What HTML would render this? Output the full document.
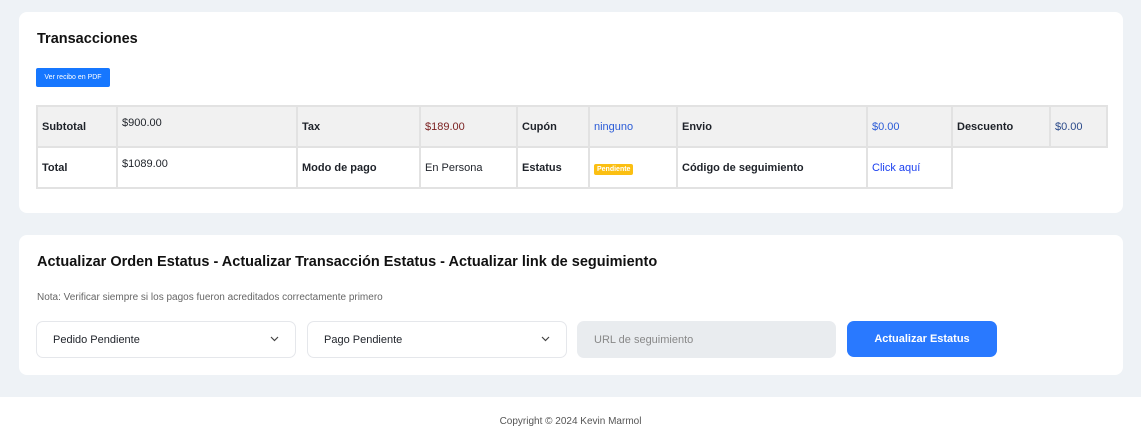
<!DOCTYPE html>
<html><head><meta charset="utf-8"><style>
*{box-sizing:border-box;margin:0;padding:0}
html,body{width:1141px;height:439px;overflow:hidden}
body{background:#eef2f6;font-family:"Liberation Sans",sans-serif;color:#1e2229;position:relative}
.card{position:absolute;left:19px;width:1104px;background:#fff;border-radius:8px}
h2{position:absolute;font-size:14.5px;font-weight:bold;color:#111}
.btn{position:absolute;left:17px;top:56px;width:74px;height:19px;background:#1677ff;color:#fff;font-size:7px;border-radius:2px;text-align:center;line-height:19px}
table{position:absolute;left:17px;top:93px;border-collapse:collapse;font-size:11px;table-layout:fixed;width:1070px}
td{border:2px solid #e2e2e2;height:41px;padding:0 4px;vertical-align:middle;white-space:nowrap}
tr.g td{background:#f1f1f1}
td.b{font-weight:bold}
td.t{vertical-align:top;padding-top:10px}
.blue{color:#2a5bd7}
.badge{background:#fbbf12;color:#fff;font-size:7px;font-weight:bold;padding:2px 3px;border-radius:2px}
.sel{position:absolute;top:86px;height:37px;border:1px solid #e5e7eb;border-radius:7px;font-size:11px;padding:0 16px;line-height:36px}
.sel svg{position:absolute;right:16px;top:14px}
</style></head><body>
<div class="card" style="top:12px;height:201px">
<h2 style="left:18px;top:19px">Transacciones</h2>
<div class="btn">Ver recibo en PDF</div>
<table>
<colgroup><col style="width:80px"><col style="width:180px"><col style="width:123px"><col style="width:97px"><col style="width:72px"><col style="width:88px"><col style="width:190px"><col style="width:85px"><col style="width:98px"><col style="width:57px"></colgroup>
<tr class="g"><td class="b">Subtotal</td><td class="t">$900.00</td><td class="b">Tax</td><td style="color:#7a1f1f">$189.00</td><td class="b">Cupón</td><td class="blue">ninguno</td><td class="b">Envio</td><td class="blue">$0.00</td><td class="b">Descuento</td><td style="color:#2b4a8a">$0.00</td></tr>
<tr><td class="b">Total</td><td class="t">$1089.00</td><td class="b">Modo de pago</td><td>En Persona</td><td class="b">Estatus</td><td><span class="badge">Pendiente</span></td><td class="b">Código de seguimiento</td><td style="color:#1a3ff0">Click aquí</td><td style="border:none;border-left:2px solid #e2e2e2"></td><td style="border:none"></td></tr>
</table>
</div>
<div class="card" style="top:235px;height:140px">
<h2 style="left:18px;top:19px">Actualizar Orden Estatus - Actualizar Transacción Estatus - Actualizar link de seguimiento</h2>
<div style="position:absolute;left:18px;top:57px;font-size:10px;color:#666">Nota: Verificar siempre si los pagos fueron acreditados correctamente primero</div>
<div class="sel" style="left:17px;width:260px">Pedido Pendiente<svg width="9" height="6" viewBox="0 0 9 6"><path d="M1 1l3.5 3.5L8 1" stroke="#444" fill="none" stroke-width="1.2"/></svg></div>
<div class="sel" style="left:288px;width:260px">Pago Pendiente<svg width="9" height="6" viewBox="0 0 9 6"><path d="M1 1l3.5 3.5L8 1" stroke="#444" fill="none" stroke-width="1.2"/></svg></div>
<div class="sel" style="left:558px;width:259px;background:#e9ecef;border-color:#e9ecef;color:#888">URL de seguimiento</div>
<div style="position:absolute;left:828px;top:86px;width:150px;height:36px;background:#2979ff;border-radius:7px;color:#fff;font-size:11px;font-weight:bold;text-align:center;line-height:36px">Actualizar Estatus</div>
</div>
<div style="position:absolute;left:0;top:397px;width:1141px;height:42px;background:#fff;text-align:center;font-size:10px;color:#555;line-height:50px">Copyright © 2024 Kevin Marmol</div>
</body></html>
